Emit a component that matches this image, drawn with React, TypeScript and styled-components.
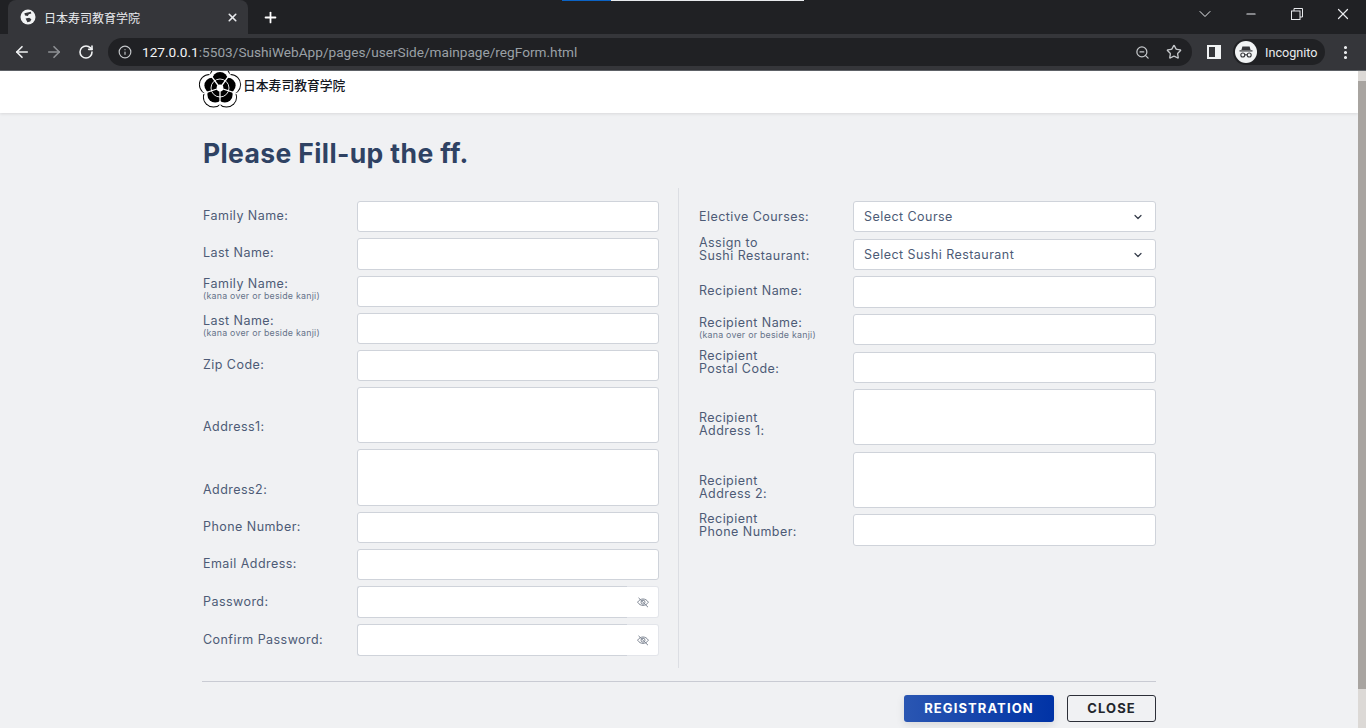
import React from "react"
import styled, { createGlobalStyle } from "styled-components"
import { ArrowLeft, ArrowRight, ChevronDown, Info, Minus, MoreVertical, Plus, RotateCw, Star, X, ZoomOut } from "lucide-react"

const GlobalStyle = createGlobalStyle`
    html, body { margin: 0; padding: 0; height: 100%; overflow: hidden; }
    * { box-sizing: border-box; }
    body { font-family: Inter, "Liberation Sans", "Noto Sans CJK JP", sans-serif; background: #f0f1f3; }
`

const Shell = styled.div`
    width: 1366px;
    height: 728px;
    display: flex;
    flex-direction: column;
    overflow: hidden;
`

const TabStrip = styled.div`
    height: 34px;
    background: #202124;
    display: flex;
    padding-left: 8px;
    position: relative;
`

const Progress = styled.div`
    position: absolute;
    top: 0;
    left: 562px;
    width: 242px;
    height: 1px;
    background: linear-gradient(90deg, #0b63c5 0 49px, #e8eaed 49px);
`

const Tab = styled.div`
    width: 240px;
    background: #35363a;
    border-radius: 8px 8px 0 0;
    display: flex;
    align-items: center;
    padding: 0 9px 0 12px;
    color: #e8eaed;
    font-size: 12px;
    font-family: "Noto Sans CJK JP", sans-serif;
    gap: 8px;
    svg { flex: none; }
    span { flex: 1; }
`

const NewTab = styled.div`
    width: 44px;
    display: flex;
    align-items: center;
    justify-content: center;
    color: #fff;
`

const WindowControls = styled.div`
    margin-left: auto;
    display: flex;
    align-items: center;
    color: #e8eaed;
    height: 28px;
`

const WindowButton = styled.div`
    width: 46px;
    display: flex;
    justify-content: center;
    align-items: center;
`

const Toolbar = styled.div`
    height: 37px;
    background: #35363a;
    border-bottom: 1px solid #5f6368;
    display: flex;
    align-items: center;
    padding: 0 0 0 6px;
`

const NavButton = styled.div<{ $dim?: boolean; $end?: boolean }>`
    width: 32px;
    flex: none;
    margin-left: ${p => (p.$end ? "4px" : "0")};
    display: flex;
    justify-content: center;
    color: ${p => (p.$dim ? "#8f9195" : "#f1f3f4")};
`

const Omnibox = styled.div`
    flex: none;
    width: 1084px;
    height: 28px;
    margin-left: 6px;
    background: #202124;
    border-radius: 14px;
    display: flex;
    align-items: center;
    padding: 0 10px 0 10px;
    font-size: 13.65px;
    font-family: Roboto, sans-serif;
    color: #9aa0a6;
    svg { flex: none; }
`

const Host = styled.span`
    color: #f1f3f4;
    margin-left: 10px;
`

const OmniIcons = styled.div`
    margin-left: auto;
    display: flex;
    gap: 16px;
    align-items: center;
    color: #c4c7ca;
`

const Profile = styled.div`
    flex: none;
    width: 92px;
    height: 26px;
    margin-left: 12px;
    background: #202124;
    border-radius: 13px;
    display: flex;
    align-items: center;
    gap: 8px;
    padding-left: 2px;
    color: #e8eaed;
    font-size: 12.6px;
    font-family: Roboto, sans-serif;
`

const SidePanelIcon = styled.div`
    flex: none;
    width: 14px;
    height: 14px;
    margin-left: 15px;
    border: 2px solid #f1f3f4;
    border-right-width: 6px;
`

const Viewport = styled.div`
    flex: 1;
    display: flex;
    min-height: 0;
`

const Page = styled.div`
    flex: 1;
    min-width: 0;
    background: #f0f1f3;
`

const ScrollTrack = styled.div`
    width: 8px;
    background: #dcd9d6;
    padding-top: 10px;
`

const ScrollThumb = styled.div`
    height: 608px;
    background: #a8a4a0;
`

const Header = styled.header`
    height: 42px;
    background: #fff;
    box-shadow: 0 1px 3px rgba(0, 0, 0, 0.1);
    overflow: hidden;
`

const HeaderInner = styled.div`
    width: 954px;
    margin: 0 auto;
    display: flex;
    align-items: flex-start;
    gap: 1px;
`

const Logo = styled.svg`
    width: 44px;
    height: 44px;
    margin: -5px 0 0 -4px;
    flex: none;
`

const Brand = styled.div`
    font-family: "Noto Sans CJK JP", sans-serif;
    font-size: 12.8px;
    font-weight: 500;
    line-height: 28px;
    color: #15181f;
`

const Main = styled.main`
    width: 954px;
    margin: 0 auto;
    padding-top: 24px;
`

const Title = styled.h1`
    margin: 0 0 19px 1px;
    font-size: 26.5px;
    line-height: 32px;
    font-weight: 700;
    color: #2f4263;
    letter-spacing: 0.38px;
`

const Columns = styled.div`
    display: grid;
    grid-template-columns: 476px 1fr;
    height: 480px;
`

const Column = styled.div<{ $right?: boolean; $gap: number }>`
    display: flex;
    flex-direction: column;
    gap: ${p => p.$gap}px;
    padding-top: 13px;
    padding-right: ${p => (p.$right ? "0" : "19px")};
    padding-left: ${p => (p.$right ? "19px" : "0")};
    border-left: ${p => (p.$right ? "1px solid #dcdee3" : "none")};
`

const Row = styled.div`
    display: grid;
    grid-template-columns: 155px 1fr;
    align-items: center;
`

const Label = styled.label<{ $drop?: number; $lift: number; $raised?: boolean }>`
    padding-left: 1px;
    padding-top: ${p => p.$drop || 0}px;
    padding-bottom: ${p => (p.$raised ? 0 : p.$lift)}px;
    align-self: ${p => (p.$raised ? "start" : "auto")};
    margin-top: ${p => (p.$raised ? "-2.5px" : "0")};
    font-size: 12.5px;
    line-height: 13px;
    letter-spacing: 0.45px;
    color: #4d5b76;
    white-space: pre-line;
`

const Hint = styled.small`
    display: block;
    font-size: 8.8px;
    line-height: 11px;
    letter-spacing: 0.25px;
    color: #66738a;
`

const TextInput = styled.input`
    width: 100%;
    height: 31.25px;
    background: #fff;
    border: 1px solid #cfd3da;
    border-radius: 3px;
    outline: none;
`

const TextArea = styled.textarea`
    display: block;
    width: 100%;
    height: 56.2px;
    background: #fff;
    border: 1px solid #cfd3da;
    border-radius: 3px;
    outline: none;
    resize: none;
`

const SelectWrap = styled.div`
    position: relative;
    color: #333a48;
    svg { position: absolute; right: 12px; top: 10px; }
`

const Select = styled.select`
    width: 100%;
    height: 31.25px;
    appearance: none;
    background: #fff;
    border: 1px solid #cfd3da;
    border-radius: 3px;
    outline: none;
    padding: 0 10px;
    font-family: inherit;
    font-size: 12.5px;
    letter-spacing: 0.45px;
    color: #4d5b76;
`

const PasswordGroup = styled.div`
    display: flex;
    height: 32px;
`

const PasswordInput = styled.input`
    flex: 1;
    min-width: 0;
    background: #fff;
    border: 1px solid #cfd3da;
    border-right: none;
    border-radius: 3px 0 0 3px;
    outline: none;
`

const EyeAddon = styled.div`
    width: 32px;
    background: #fff;
    border: 1px solid #e3e5ea;
    border-left: none;
    border-radius: 0 3px 3px 0;
    display: flex;
    align-items: center;
    justify-content: center;
`

const Footer = styled.footer`
    margin-top: 13px;
    border-top: 1px solid #c9cbd3;
    padding-top: 13px;
    display: flex;
    justify-content: flex-end;
    gap: 13px;
`

const Button = styled.button<{ $primary?: boolean }>`
    height: 27px;
    width: ${p => (p.$primary ? "150px" : "89px")};
    border-radius: 3px;
    border: ${p => (p.$primary ? "none" : "1px solid #2c2f38")};
    background: ${p => (p.$primary ? "linear-gradient(90deg, #2a56b2, #0033a6)" : "transparent")};
    box-shadow: ${p => (p.$primary ? "0 3px 8px rgba(0, 0, 0, 0.1)" : "none")};
    color: ${p => (p.$primary ? "#fff" : "#22252c")};
    font-family: inherit;
    font-size: 13px;
    font-weight: 700;
    letter-spacing: 1.1px;
    padding: 0 0 2px;
`

function EyeOff() {
    return <svg width="12" height="11" viewBox="0 0 12 11" fill="none" stroke="#7f8794" strokeWidth="1">
        <path d="M0.6 5.2C2 3 4 2 6 2s4 1 5.4 3.2C10 7.4 8 8.4 6 8.4S2 7.4 0.6 5.2Z"/>
        <circle cx="6" cy="5.2" r="2"/>
        <path d="M1.5 0.8L11 10.2"/>
    </svg>
}

function GlobeIcon() {
    return <svg width="16" height="16" viewBox="0 0 16 16">
        <circle cx="8" cy="8" r="7.5" fill="#f1f3f4"/>
        <path d="M10.800 2.800L11.300 4.500L8.800 5.200L7.800 7L5 6.400L4.400 4.200Z" fill="#35363a"/>
        <path d="M5.600 9.400L9.200 8.800L11.400 10.200L10.200 12.400L7.400 13.200Z" fill="#35363a"/>
    </svg>
}

function PlumLogo() {
    const angles = [0, 72, 144, 216, 288]
    const lobes = angles.map(a => {
        const r = ((a - 90) * Math.PI) / 180
        return { x: 22 + 11 * Math.cos(r), y: 22 + 11 * Math.sin(r) }
    })
    const inner = angles.map(a => {
        const r = ((a - 90) * Math.PI) / 180
        return { x: 22 + 8.200 * Math.cos(r), y: 22 + 8.200 * Math.sin(r) }
    })
    return <Logo viewBox="0 0 44 44">
        {lobes.map((l, i) => <circle key={i} cx={l.x} cy={l.y} r="10.600" fill="#000"/>)}
        {lobes.map((l, i) => <circle key={i} cx={l.x} cy={l.y} r="9.700" fill="#fff"/>)}
        {inner.map((l, i) => <circle key={i} cx={l.x} cy={l.y} r="7.800" fill="#000"/>)}
        {angles.map(a => <path key={a} d="M22 22V4" stroke="#fff" strokeWidth="1.300" transform={`rotate(${a + 36} 22 22)`}/>)}
        <circle cx="22" cy="22" r="9" fill="none" stroke="#fff" strokeWidth="0.900"/>
        <circle cx="22" cy="22" r="3.400" fill="#fff"/>
    </Logo>
}

function IncognitoBadge() {
    return <svg width="22" height="22" viewBox="0 0 22 22">
        <circle cx="11" cy="11" r="11" fill="#f1f3f4"/>
        <path d="M7.400 5.500h7.200l1 3.600H6.400z" fill="#35363a"/>
        <rect x="4.500" y="9.300" width="13" height="1.200" fill="#35363a"/>
        <circle cx="7.800" cy="14" r="2" fill="none" stroke="#35363a" strokeWidth="1.100"/>
        <circle cx="14.200" cy="14" r="2" fill="none" stroke="#35363a" strokeWidth="1.100"/>
        <path d="M9.800 13.800h2.400" stroke="#35363a" strokeWidth="1.100"/>
    </svg>
}

function RestoreIcon() {
    return <svg width="12" height="12" viewBox="0 0 12 12" fill="none" stroke="#e8eaed">
        <rect x="0.5" y="3" width="8.500" height="8.500"/>
        <path d="M3 3V0.5h8.500V9H9"/>
    </svg>
}

function Field({ label, hint, drop, lift = 2, raised }: { label: string; hint?: boolean; drop?: number; lift?: number; raised?: boolean }) {
    return <Label $drop={drop} $lift={lift} $raised={raised}>
        {label}
        {hint && <Hint>(kana over or beside kanji)</Hint>}
    </Label>
}

function Password({ label }: { label: string }) {
    return <Row>
        <Field label={label}/>
        <PasswordGroup>
            <PasswordInput type="password"/>
            <EyeAddon><EyeOff/></EyeAddon>
        </PasswordGroup>
    </Row>
}

export default function App() {
    return <Shell>
        <GlobalStyle/>
        <TabStrip>
            <Progress/>
            <Tab>
                <GlobeIcon/>
                <span>日本寿司教育学院</span>
                <X size={13} strokeWidth={3}/>
            </Tab>
            <NewTab><Plus size={17} strokeWidth={2.5}/></NewTab>
            <WindowControls>
                <WindowButton><ChevronDown size={20} strokeWidth={1.2}/></WindowButton>
                <WindowButton><Minus size={14} strokeWidth={2}/></WindowButton>
                <WindowButton><RestoreIcon/></WindowButton>
                <WindowButton><X size={18} strokeWidth={1.600}/></WindowButton>
            </WindowControls>
        </TabStrip>
        <Toolbar>
            <NavButton><ArrowLeft size={18} strokeWidth={2.2}/></NavButton>
            <NavButton $dim><ArrowRight size={18} strokeWidth={2.2}/></NavButton>
            <NavButton><RotateCw size={16} strokeWidth={2.4}/></NavButton>
            <Omnibox>
                <Info size={14} color="#c4c7ca"/>
                <Host>127.0.0.1</Host>:5503/SushiWebApp/pages/userSide/mainpage/regForm.html
                <OmniIcons>
                    <ZoomOut size={15}/>
                    <Star size={16}/>
                </OmniIcons>
            </Omnibox>
            <SidePanelIcon/>
            <Profile><IncognitoBadge/>Incognito</Profile>
            <NavButton $end><MoreVertical size={17} strokeWidth={2.4}/></NavButton>
        </Toolbar>
        <Viewport>
            <Page>
                <Header>
                    <HeaderInner>
                        <PlumLogo/>
                        <Brand>日本寿司教育学院</Brand>
                    </HeaderInner>
                </Header>
                <Main>
                    <Title>Please Fill-up the ff.</Title>
                    <Columns>
                        <Column $gap={6}>
                            <Row><Field label="Family Name:"/><TextInput/></Row>
                            <Row><Field label="Last Name:"/><TextInput/></Row>
                            <Row><Field label="Family Name:" hint lift={4}/><TextInput/></Row>
                            <Row><Field label="Last Name:" hint lift={4}/><TextInput/></Row>
                            <Row><Field label="Zip Code:"/><TextInput/></Row>
                            <Row><Field label="Address1:" drop={24}/><TextArea/></Row>
                            <Row><Field label="Address2:" drop={26}/><TextArea/></Row>
                            <Row><Field label="Phone Number:"/><TextInput/></Row>
                            <Row><Field label="Email Address:"/><TextInput/></Row>
                            <Password label="Password:"/>
                            <Password label="Confirm Password:"/>
                        </Column>
                        <Column $right $gap={6.42}>
                            <Row>
                                <Field label="Elective Courses:" lift={0}/>
                                <SelectWrap>
                                    <Select><option>Select Course</option></Select>
                                    <ChevronDown size={12} strokeWidth={2.4}/>
                                </SelectWrap>
                            </Row>
                            <Row>
                                <Field label={"Assign to\nSushi Restaurant:"} raised/>
                                <SelectWrap>
                                    <Select><option>Select Sushi Restaurant</option></Select>
                                    <ChevronDown size={12} strokeWidth={2.4}/>
                                </SelectWrap>
                            </Row>
                            <Row><Field label="Recipient Name:"/><TextInput/></Row>
                            <Row><Field label="Recipient Name:" hint lift={4}/><TextInput/></Row>
                            <Row><Field label={"Recipient\nPostal Code:"} raised/><TextInput/></Row>
                            <Row><Field label={"Recipient\nAddress 1:"} drop={16}/><TextArea/></Row>
                            <Row><Field label={"Recipient\nAddress 2:"} drop={16}/><TextArea/></Row>
                            <Row><Field label={"Recipient\nPhone Number:"} raised/><TextInput/></Row>
                        </Column>
                    </Columns>
                    <Footer>
                        <Button $primary>REGISTRATION</Button>
                        <Button>CLOSE</Button>
                    </Footer>
                </Main>
            </Page>
            <ScrollTrack><ScrollThumb/></ScrollTrack>
        </Viewport>
    </Shell>
}
